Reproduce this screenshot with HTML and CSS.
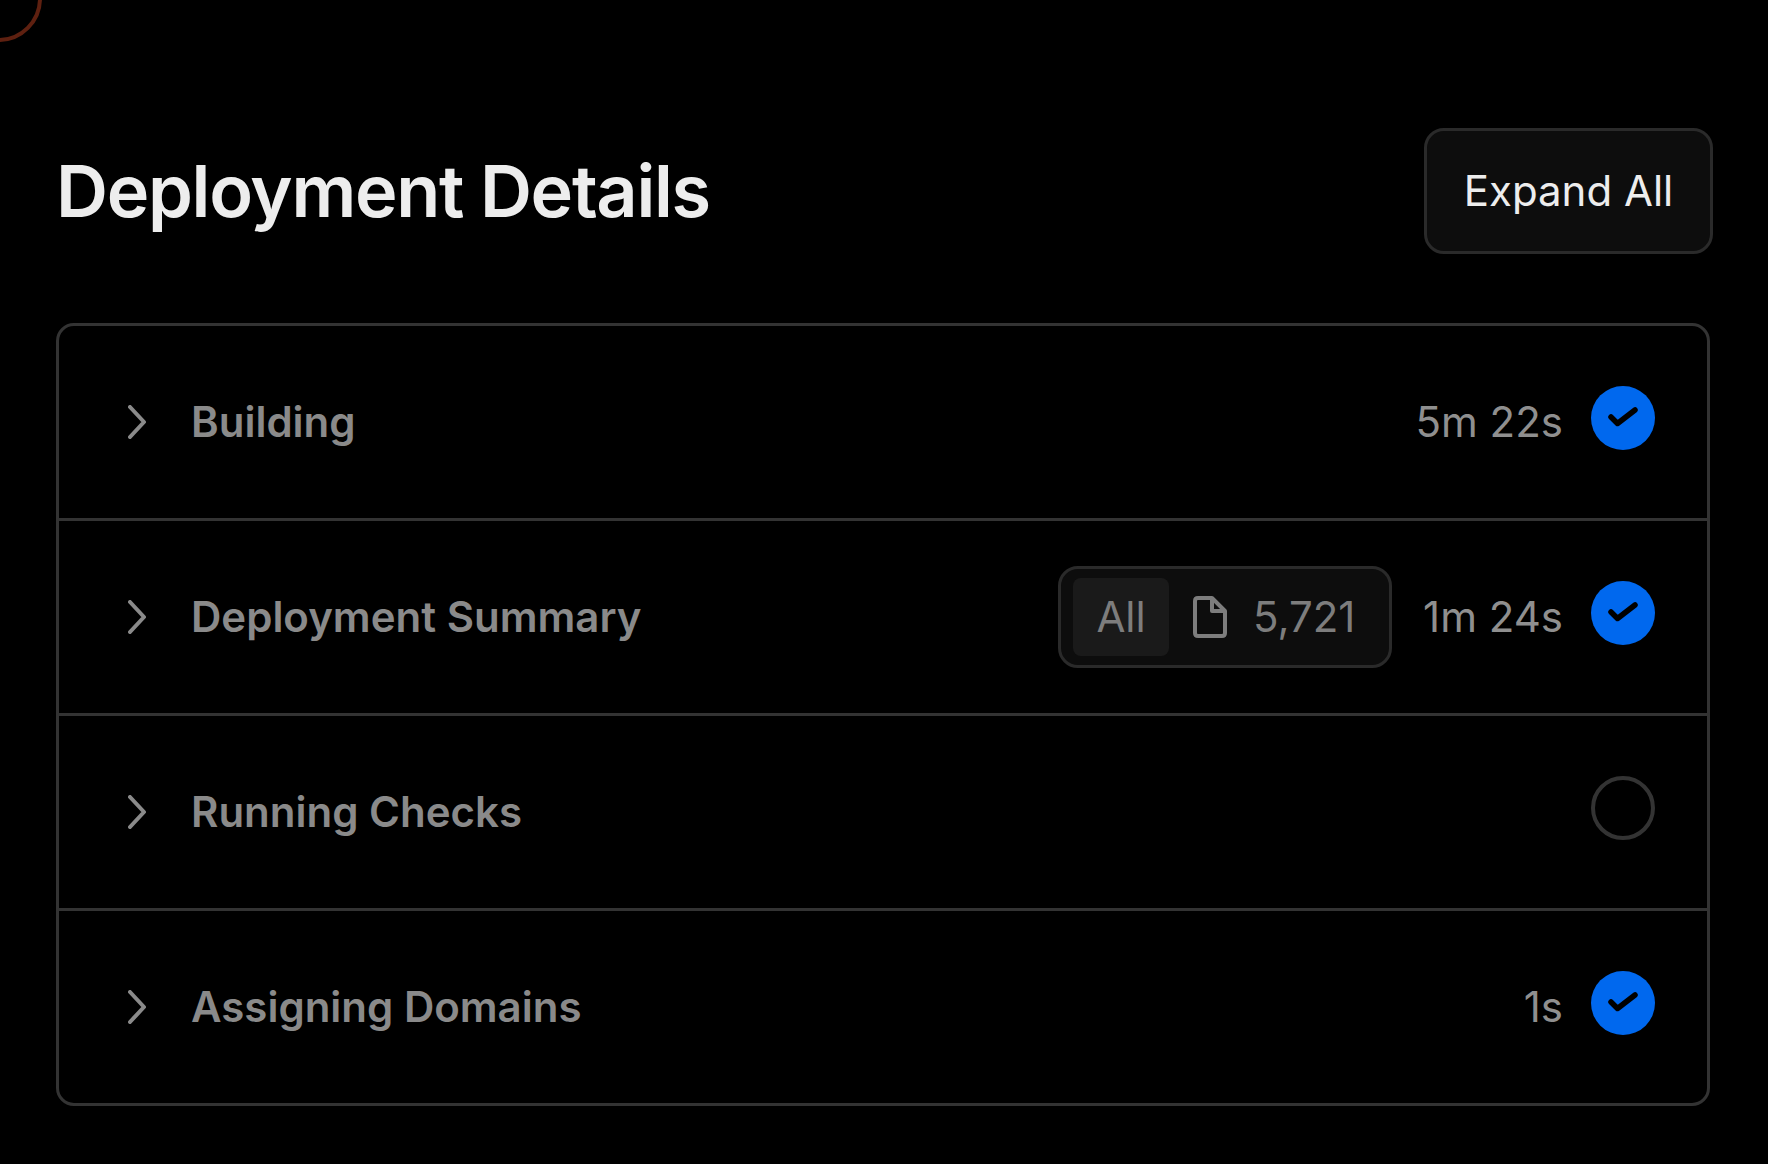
FILE: index.html
```html
<!DOCTYPE html>
<html lang="en">
<head>
    <meta charset="UTF-8">
    <title>Deployment Details</title>
    <link rel="stylesheet" href="styles.css">
</head>
<body>
    <div class="arc"></div>
    <div class="page">
        <div class="head">
            <h1>Deployment Details</h1>
            <button class="expand">Expand All</button>
        </div>
        <div class="card">
            <div class="row">
                <svg class="chev" width="18" height="34" viewBox="0 0 18 34"><path d="M2 2L16 17L2 32"/></svg>
                <span class="name">Building</span>
                <span class="time">5m 22s</span>
                <svg class="status" width="64" height="64" viewBox="0 0 64 64"><circle cx="32" cy="32" r="32" fill="#0068ee"/><path class="tick" d="M20 31L26.5 37.5L44 24"/></svg>
            </div>
            <div class="row">
                <svg class="chev" width="18" height="34" viewBox="0 0 18 34"><path d="M2 2L16 17L2 32"/></svg>
                <span class="name">Deployment Summary</span>
                <div class="pill">
                    <span class="all">All</span>
                    <svg class="file" width="34" height="42" viewBox="0 0 34 42"><path d="M2 5Q2 2 5 2H19L32 15V37Q32 40 29 40H5Q2 40 2 37ZM19 2V15H32"/></svg>
                    <span class="count">5,721</span>
                </div>
                <span class="time">1m 24s</span>
                <svg class="status" width="64" height="64" viewBox="0 0 64 64"><circle cx="32" cy="32" r="32" fill="#0068ee"/><path class="tick" d="M20 31L26.5 37.5L44 24"/></svg>
            </div>
            <div class="row">
                <svg class="chev" width="18" height="34" viewBox="0 0 18 34"><path d="M2 2L16 17L2 32"/></svg>
                <span class="name">Running Checks</span>
                <svg class="status" width="64" height="64" viewBox="0 0 64 64"><circle cx="32" cy="32" r="30" fill="none" stroke="#333" stroke-width="4"/></svg>
            </div>
            <div class="row">
                <svg class="chev" width="18" height="34" viewBox="0 0 18 34"><path d="M2 2L16 17L2 32"/></svg>
                <span class="name">Assigning Domains</span>
                <span class="time">1s</span>
                <svg class="status" width="64" height="64" viewBox="0 0 64 64"><circle cx="32" cy="32" r="32" fill="#0068ee"/><path class="tick" d="M20 31L26.5 37.5L44 24"/></svg>
            </div>
        </div>
    </div>
</body>
</html>
```

FILE: styles.css
```css
*{
    margin:0;
    padding:0;
    box-sizing:border-box;
}
html,body{
    height:100%;
    overflow:hidden;
}
body{
    background-color:#000;
    font-family:Inter,"Liberation Sans",sans-serif;
}
.arc{
    position:absolute;
    left:-45px;
    top:-45px;
    width:87px;
    height:87px;
    border:4px solid #5e2010;
    border-radius:50%;
}
.page{
    padding:128px 55px 0 56px;
}
.head{
    display:flex;
    justify-content:space-between;
    align-items:center;
    margin-bottom:69px;
}
h1{
    padding-bottom:2px;
    font-size:72px;
    font-weight:600;
    letter-spacing:-1.3px;
    color:#ededed;
}
.expand{
    width:289px;
    height:126px;
    padding-bottom:2px;
    background-color:#0d0d0d;
    border:3px solid #2a2a2a;
    border-radius:20px;
    font-family:inherit;
    font-size:42px;
    font-weight:400;
    color:#ededed;
}
.card{
    margin-right:3px;
    border:3px solid #333;
    border-radius:18px;
}
.row{
    display:flex;
    align-items:center;
    height:195px;
    padding:0 52px 0 69px;
    border-bottom:3px solid #333;
}
.row:last-child{
    height:192px;
    border-bottom:none;
}
.chev{
    flex:none;
    fill:none;
    stroke:#8a8a8a;
    stroke-width:4;
    stroke-linecap:round;
    stroke-linejoin:round;
}
.name{
    margin-left:45px;
    padding-bottom:2px;
    font-size:42px;
    font-weight:600;
    color:#8a8a8a;
}
.time{
    margin-left:31px;
    padding-bottom:2px;
    font-size:42px;
    color:#8f8f8f;
}
.name + .time,.name + .status,.name + .pill{
    margin-left:auto;
}
.status{
    flex:none;
    margin-left:28px;
    margin-bottom:9px;
}
.tick{
    fill:none;
    stroke:#000;
    stroke-width:5.5;
    stroke-linecap:round;
    stroke-linejoin:round;
}
.pill{
    display:flex;
    align-items:center;
    width:334px;
    height:102px;
    padding:0 12px;
    background-color:#0d0d0d;
    border:3px solid #2a2a2a;
    border-radius:20px;
    font-size:42px;
    color:#7d7d7d;
}
.all{
    display:flex;
    align-items:center;
    justify-content:center;
    width:96px;
    height:78px;
    padding-bottom:2px;
    background-color:#1a1a1a;
    border-radius:8px;
}
.file{
    flex:none;
    margin-left:24px;
    fill:none;
    stroke:#7d7d7d;
    stroke-width:4;
    stroke-linejoin:round;
}
.count{
    margin-left:26px;
    padding-bottom:2px;
}
```
